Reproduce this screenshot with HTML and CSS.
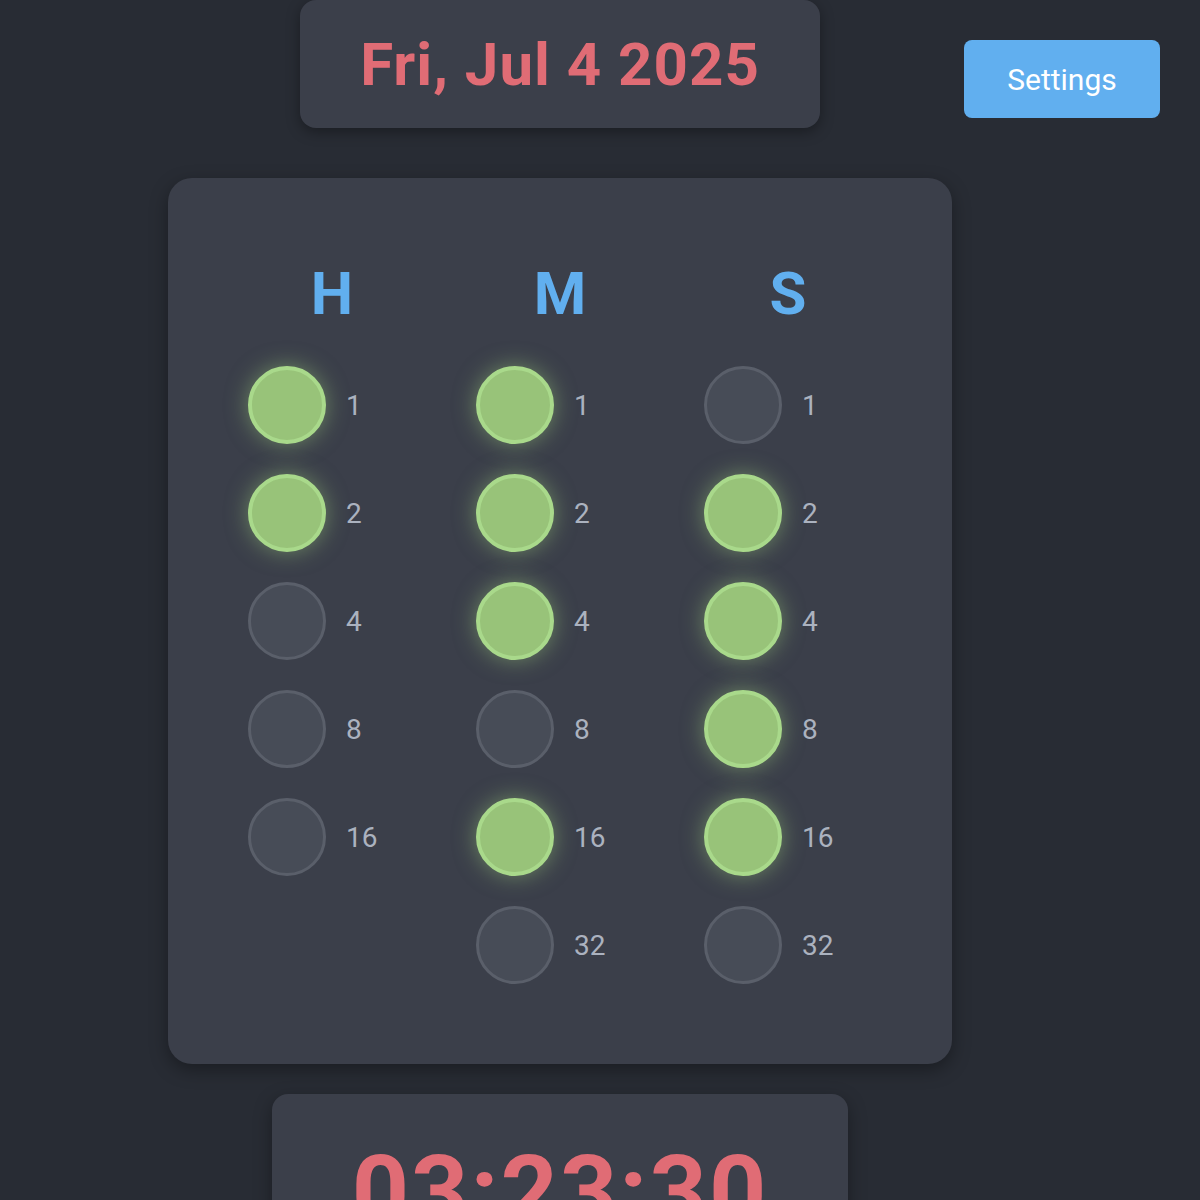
FILE: index.html
```html
<!DOCTYPE html>
<html>
<head>
<meta charset="utf-8">
<link rel="stylesheet" href="styles.css">
</head>
<body>
<div class="page">
  <div class="date-box"><span class="date">Fri, Jul 4 2025</span></div>
  <div class="card">
    <div class="col">
      <div class="head">H</div>
      <div class="bit"><span class="dot on"></span><span class="lbl">1</span></div>
      <div class="bit"><span class="dot on"></span><span class="lbl">2</span></div>
      <div class="bit"><span class="dot"></span><span class="lbl">4</span></div>
      <div class="bit"><span class="dot"></span><span class="lbl">8</span></div>
      <div class="bit"><span class="dot"></span><span class="lbl">16</span></div>
    </div>
    <div class="col">
      <div class="head">M</div>
      <div class="bit"><span class="dot on"></span><span class="lbl">1</span></div>
      <div class="bit"><span class="dot on"></span><span class="lbl">2</span></div>
      <div class="bit"><span class="dot on"></span><span class="lbl">4</span></div>
      <div class="bit"><span class="dot"></span><span class="lbl">8</span></div>
      <div class="bit"><span class="dot on"></span><span class="lbl">16</span></div>
      <div class="bit"><span class="dot"></span><span class="lbl">32</span></div>
    </div>
    <div class="col">
      <div class="head">S</div>
      <div class="bit"><span class="dot"></span><span class="lbl">1</span></div>
      <div class="bit"><span class="dot on"></span><span class="lbl">2</span></div>
      <div class="bit"><span class="dot on"></span><span class="lbl">4</span></div>
      <div class="bit"><span class="dot on"></span><span class="lbl">8</span></div>
      <div class="bit"><span class="dot on"></span><span class="lbl">16</span></div>
      <div class="bit"><span class="dot"></span><span class="lbl">32</span></div>
    </div>
  </div>
  <div class="time-box"><span class="time">03:23:30</span></div>
</div>
<button class="settings">Settings</button>
</body>
</html>
```
FILE: styles.css
```css
html, body {
  margin: 0;
  padding: 0;
  background: #282c34;
  height: 1200px;
  overflow: hidden;
  font-family: Roboto, "Liberation Sans", sans-serif;
}
.page {
  width: 1120px;
  display: flex;
  flex-direction: column;
  align-items: center;
}
.date-box {
  width: 520px;
  height: 128px;
  box-sizing: border-box;
  background: #3b3f4a;
  border-radius: 16px;
  box-shadow: 0 4px 14px rgba(0,0,0,0.35);
  display: flex;
  align-items: center;
  justify-content: center;
}
.date {
  color: #e06c75;
  font-size: 60px;
  font-weight: 700;
  letter-spacing: 1px;
}
.card {
  margin-top: 50px;
  width: 784px;
  height: 886px;
  box-sizing: border-box;
  padding: 80px 50px;
  background: #3b3f4a;
  border-radius: 24px;
  box-shadow: 0 6px 18px rgba(0,0,0,0.35);
  display: grid;
  grid-template-columns: repeat(3, 228px);
  align-items: start;
}
.col {
  display: flex;
  flex-direction: column;
  align-items: center;
}
.head {
  color: #61afef;
  font-size: 60px;
  font-weight: 700;
  line-height: 72px;
  height: 72px;
  margin-bottom: 36px;
}
.bit {
  width: 168px;
  display: flex;
  align-items: center;
  gap: 20px;
  height: 78px;
  margin-bottom: 30px;
}
.dot {
  width: 78px;
  height: 78px;
  box-sizing: border-box;
  border-radius: 50%;
  background: #474c57;
  border: 3px solid #5a5f6a;
  flex: none;
}
.dot.on {
  background: #98c379;
  border: 4px solid #a9d98b;
  box-shadow: 0 0 22px rgba(152,195,121,0.55);
}
.lbl {
  color: #abb2bf;
  font-size: 28px;
}
.time-box {
  margin-top: 30px;
  width: 576px;
  height: 200px;
  background: #3b3f4a;
  border-radius: 16px;
  box-shadow: 0 6px 18px rgba(0,0,0,0.35);
  display: flex;
  justify-content: center;
  box-sizing: border-box;
  padding-top: 48px;
}
.time {
  color: #e06c75;
  font-size: 100px;
  font-weight: 700;
  line-height: 100px;
  letter-spacing: 2px;
}
.settings {
  position: absolute;
  top: 40px;
  right: 40px;
  width: 196px;
  height: 78px;
  background: #61afef;
  color: #ffffff;
  border: none;
  border-radius: 8px;
  font-family: Roboto, "Liberation Sans", sans-serif;
  font-size: 30px;
  padding: 0;
}
```
